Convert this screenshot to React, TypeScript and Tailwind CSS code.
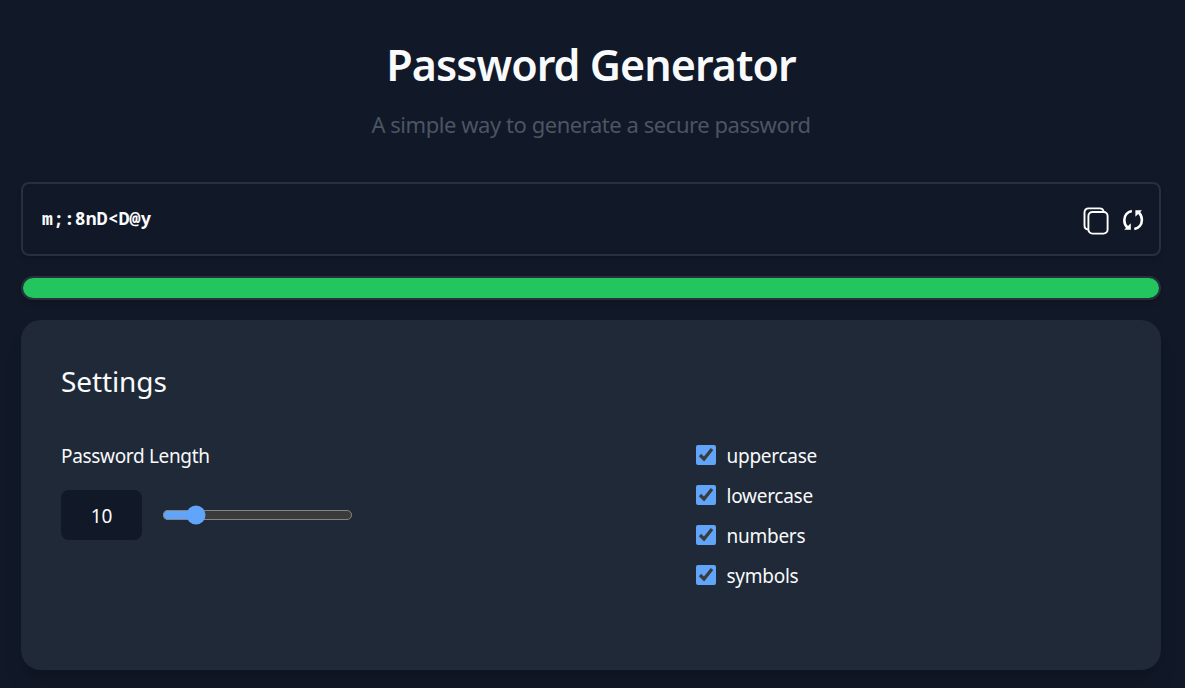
import { useState } from "react";

const options = ["uppercase", "lowercase", "numbers", "symbols"];

function CopyIcon() {
  return (
    <svg width="26" height="28" viewBox="0 0 26 28" fill="none" stroke="white" strokeWidth="1.9">
      <rect x="5.4" y="5" width="19.2" height="21.6" rx="4" />
      <path d="M5.2 22.6C2.8 22.4 1.5 20.7 1.5 18.6V5.6C1.5 3 3 1.4 5.6 1.4H16.6C18.8 1.4 20.4 2.8 20.7 5" />
    </svg>
  );
}

function RefreshIcon() {
  return (
    <svg width="22" height="22" viewBox="0 0 22 22" fill="none" stroke="white" strokeWidth="2.6">
      <path d="M9.9 1.9C5.4 2.8 2.3 6.4 2.3 11.2C2.3 14.2 3.5 16.8 5.7 18.8" />
      <path d="M12.3 20.1C16.8 19.2 19.9 15.6 19.9 10.8C19.9 7.8 18.7 5.2 16.5 3.2" />
      <path d="M8.8 14.2V20.8H2.2Z" fill="white" stroke="none" />
      <path d="M13.4 7.8V1.2H20Z" fill="white" stroke="none" />
    </svg>
  );
}

export default function App() {
  const [length, setLength] = useState(10);
  const [enabled, setEnabled] = useState<string[]>(options);
  const toggle = (name: string) =>
    setEnabled(enabled.includes(name) ? enabled.filter((o) => o !== name) : [...enabled, name]);

  return (
    <main className="h-[688px] overflow-hidden bg-[#111827] pr-6 pl-[21px] font-['Segoe_UI','Noto_Sans',sans-serif] text-gray-50 scheme-dark">
      <header className="flex h-[182px] flex-col items-center pt-[35px]">
        <h1 className="text-[43px] leading-[60px] font-semibold tracking-[-0.95px] whitespace-nowrap">Password Generator</h1>
        <p className="mt-3 text-[22px] leading-[34px] tracking-[-0.45px] whitespace-nowrap text-[#4b5563]">A simple way to generate a secure password</p>
      </header>

      <section className="flex h-[74px] items-center justify-between rounded-lg border-2 border-[#28303e] pr-[15px] pl-[19px] shadow-md">
        <span className="pb-0.5 font-['Consolas','Noto_Sans_Mono','DejaVu_Sans_Mono',monospace] text-[18px] font-bold tracking-[0.15px]">m;:8nD&lt;D@y</span>
        <div className="flex items-center gap-[13px] pt-[3px]">
          <button aria-label="Copy password"><CopyIcon /></button>
          <button aria-label="Generate password" className="pb-px"><RefreshIcon /></button>
        </div>
      </section>

      <div className="mt-5 h-6 rounded-full border-2 border-[#28303e] shadow-md">
        <div className="h-full rounded-full bg-[#22c55e]" />
      </div>

      <section className="mt-5 h-[350px] rounded-[20px] bg-[#1f2937] px-10 pt-[39px] shadow-xl">
        <h2 className="text-[28px] leading-[45px] tracking-[-0.1px]">Settings</h2>
        <div className="mt-9 flex">
          <div className="w-[635px]">
            <label htmlFor="length" className="block pt-px text-[19px] leading-[30px] tracking-[-0.33px]">Password Length</label>
            <div className="mt-[19px] flex items-center gap-5">
              <output className="flex h-[50px] w-[81px] items-center justify-center rounded-lg bg-[#111827] pt-0.5 text-[19px]">{length}</output>
              <input
                id="length"
                type="range"
                min={6}
                max={34}
                value={length}
                onChange={(e) => setLength(Number(e.target.value))}
                className="m-0 w-[152.8px] accent-[#60a5fa] [zoom:1.25]"
              />
            </div>
          </div>
          <div className="flex flex-col gap-2.5">
            {options.map((name) => (
              <label key={name} className="flex h-[30px] items-center gap-[10.5px] text-[19px] leading-[30px] tracking-[-0.26px]">
                <input
                  type="checkbox"
                  checked={enabled.includes(name)}
                  onChange={() => toggle(name)}
                  className="m-0 size-5 accent-[#60a5fa]"
                />
                <span className="pt-0.5">{name}</span>
              </label>
            ))}
          </div>
        </div>
      </section>
    </main>
  );
}
